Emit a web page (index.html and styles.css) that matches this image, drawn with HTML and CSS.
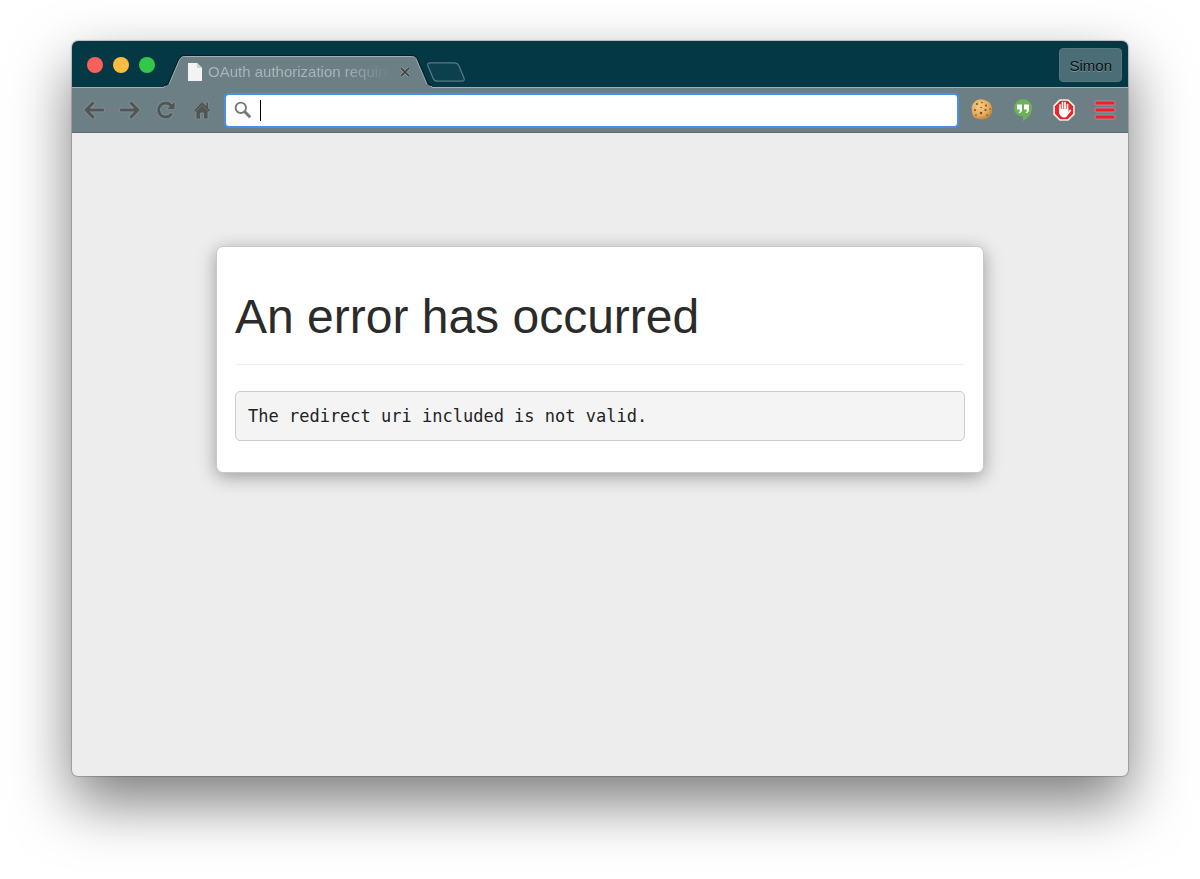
FILE: index.html
```html
<!DOCTYPE html>
<html lang="en">
<head>
<meta charset="utf-8">
<meta name="viewport" content="width=device-width, initial-scale=1">
<title>OAuth authorization required</title>
<link rel="stylesheet" href="styles.css">
</head>
<body>
<div class="window">
  <header class="titlebar">
    <div class="lights">
      <button class="light light-close" aria-label="Close window"></button>
      <button class="light light-min" aria-label="Minimize window"></button>
      <button class="light light-zoom" aria-label="Zoom window"></button>
    </div>
    <div class="tab">
      <svg class="tab-shape" viewBox="0 0 268 33" aria-hidden="true">
        <path d="M0 33V32C4 32 5 30 6 27L15 6C17 2 18 1 22 1H246C250 1 252 2 253 6L262 27C263 30 264 32 268 32V33Z" fill="#6b7f85"/>
        <path d="M0 30C3 30 4 29 5 26L14 5C16 1 18 0.5 22 0.5H246C251 0.5 253 2 254 5L263 26C264 29 265 30 268 30" fill="none" stroke="#021e29"/>
        <path d="M0 31.5C4 31.5 5 30 6 27L15 6C17 2 18 1.5 22 1.5H246C250 1.5 252 2 253 6L262 27C263 30 264 31.5 268 31.5" fill="none" stroke="#a3afb3"/>
      </svg>
      <svg class="page-icon" viewBox="0 0 14 18" aria-hidden="true">
        <path d="M0 0H9L14 5V18H0Z" fill="#f3f3f3"/>
        <path d="M9 0V5H14Z" fill="#cfd3d4"/>
      </svg>
      <span class="tab-title">OAuth authorization required</span>
      <button class="tab-close" aria-label="Close tab">
        <svg viewBox="0 0 10 10" width="10" height="10"><path d="M1 1L9 9M9 1L1 9" stroke="#a3afb3" stroke-width="3"/><path d="M1 1L9 9M9 1L1 9" stroke="#434747" stroke-width="1.8"/></svg>
      </button>
    </div>
    <button class="new-tab" aria-label="New tab">
      <svg viewBox="0 0 40 20" width="40" height="20"><path d="M4 .8H28Q32 .8 33 4L38 16Q39 19.2 36 19.2H12Q8 19.2 7 16L2 4Q1 .8 4 .8Z" fill="#0d404d" stroke="#597a82" stroke-width="1.2"/></svg>
    </button>
    <button class="profile">Simon</button>
  </header>
  <nav class="toolbar" aria-label="Browser">
    <div class="nav-buttons">
      <button class="tool" aria-label="Back">
        <svg viewBox="0 0 22 20" width="22" height="20"><path class="glow" d="M10 3L3 10L10 17M3 10H20"/><path class="ink" d="M10 3L3 10L10 17M3 10H20"/></svg>
      </button>
      <button class="tool" aria-label="Forward">
        <svg viewBox="0 0 22 20" width="22" height="20"><path class="glow" d="M12 3L19 10L12 17M19 10H2"/><path class="ink" d="M12 3L19 10L12 17M19 10H2"/></svg>
      </button>
      <button class="tool" aria-label="Reload">
        <svg viewBox="0 0 22 20" width="22" height="20"><path class="glow" d="M16 14.500A7 7 0 1 1 15.500 5L17 7"/><path d="M20 1V9.500H11.500Z" fill="#535553" stroke="#86979b" stroke-width=".7"/><path class="ink" d="M16 14.500A7 7 0 1 1 15.500 5L17 7"/></svg>
      </button>
      <button class="tool" aria-label="Home">
        <svg viewBox="0 0 22 20" width="22" height="20"><path d="M11 1.500L2.500 10.500L4 12H5V19H9.500V13H12.500V19H17V12H18L19.500 10.500L17.500 8V2H15V5.500Z" fill="#535553" stroke="#86979b" stroke-width=".7"/><path d="M4.500 11.800L11 5.200L17.500 11.800" fill="none" stroke="#7c8c8f" stroke-width=".5"/></svg>
      </button>
    </div>
    <label class="address">
      <svg viewBox="0 0 18 18" width="18" height="18" aria-hidden="true"><circle cx="6.800" cy="6.800" r="5.200" fill="none" stroke="#777" stroke-width="1.900"/><path d="M10.800 10.800L16.200 16.200" stroke="#777" stroke-width="3"/></svg>
      <span class="caret"></span>
      <input class="address-input" type="text" aria-label="Address and search bar">
    </label>
    <div class="extensions">
      <button class="tool" aria-label="Cookies">
        <svg viewBox="0 0 24 24" width="24" height="24">
          <defs><radialGradient id="cookie" cx=".4" cy=".35" r=".7"><stop offset="0" stop-color="#f6cd83"/><stop offset=".65" stop-color="#e2aa5d"/><stop offset="1" stop-color="#b97a34"/></radialGradient></defs>
          <path d="M7 2Q12 0 17 3Q22 5 22 11Q23 17 18 20Q13 23 8 21Q2 20 2 14Q0 6 7 2Z" fill="url(#cookie)"/>
          <g fill="#7b4a25"><circle cx="7" cy="6" r="1"/><circle cx="12" cy="4.500" r=".8"/><circle cx="16" cy="7.500" r="1"/><circle cx="11" cy="9.500" r=".8"/><circle cx="5" cy="12" r="1"/><circle cx="15.500" cy="12" r="1.100"/><circle cx="20" cy="11" r=".8"/><circle cx="11" cy="15" r="1.200"/><circle cx="6" cy="17" r=".8"/><circle cx="17" cy="17" r=".8"/></g>
        </svg>
      </button>
      <button class="tool" aria-label="Hangouts">
        <svg viewBox="0 0 24 24" width="24" height="24"><path d="M12 1A9 9 0 0 0 3 10C3 15 7 18.500 12 18.500V23C17 20.500 21 15.500 21 10A9 9 0 0 0 12 1Z" fill="#6fb158"/><path d="M6 6.500H11V12Q11 14 9 15H7.500Q9 13.500 9 11.500H6ZM13 6.500H18V12Q18 14 16 15H14.500Q16 13.500 16 11.500H13Z" fill="#fff"/></svg>
      </button>
      <button class="tool" aria-label="Ad blocker">
        <svg viewBox="0 0 24 24" width="24" height="24"><path d="M7.500 1H16.500L23 7.500V16.500L16.500 23H7.500L1 16.500V7.500Z" fill="#fff" stroke="#777" stroke-width=".7"/><path d="M8.200 2.800H15.800L21.200 8.200V15.800L15.800 21.200H8.200L2.800 15.800V8.200Z" fill="#e5292b"/><path d="M8 12.500V7M10.500 11V4.700M13 11V4.700M15.500 12V6.500M15.500 16L18.300 12.500" stroke="#fff" stroke-width="1.700" stroke-linecap="round"/><path d="M7.200 11H16.300V15Q15.500 19.500 12 19.500Q9 19.500 7.200 15.500Z" fill="#fff"/></svg>
      </button>
      <button class="tool" aria-label="Menu">
        <svg viewBox="0 0 24 24" width="24" height="24"><g fill="#ed2229" stroke="#9ba4a6" stroke-width=".8"><rect x="2" y="3" width="20" height="4" rx="1"/><rect x="2" y="10" width="20" height="4" rx="1"/><rect x="2" y="17" width="20" height="4" rx="1"/></g></svg>
      </button>
    </div>
  </nav>
  <main class="page">
    <section class="card">
      <h1 class="card-title">An error has occurred</h1>
      <pre class="message">The redirect uri included is not valid.</pre>
    </section>
  </main>
</div>
</body>
</html>
```
FILE: styles.css
```css
* { box-sizing: border-box; }
html { background: #fff; }
body {
  display: flex;
  flex-direction: column;
  min-height: 100vh;
  margin: 0;
  padding: 41px 72px 103px;
  font-family: "Liberation Sans", Arial, sans-serif;
}
button { padding: 0; border: 0; background: none; font: inherit; }
svg { display: block; }
.window {
  display: flex;
  flex: 1;
  flex-direction: column;
  border-radius: 6px;
  background: #ededed;
  box-shadow: 0 0 1px 1px rgba(0, 0, 0, .2), 0 26px 60px rgba(0, 0, 0, .52);
}
.titlebar {
  display: flex;
  align-items: flex-end;
  height: 47px;
  border-radius: 6px 6px 0 0;
  border-bottom: 1px solid #a3afb3;
  background: #043845;
}
.lights {
  display: flex;
  gap: 10px;
  align-self: center;
  padding: 2px 10px 0 15px;
}
.light { width: 16px; height: 16px; border-radius: 50%; }
.light-close { background: #fc605b; }
.light-min { background: #fdbc40; }
.light-zoom { background: #34c84a; }
.tab {
  position: relative;
  display: flex;
  align-items: center;
  width: 268px;
  height: 33px;
  margin: 0 0 -1px -1px;
  padding: 0 22px 0 24px;
}
.tab-shape { position: absolute; inset: 0; width: 100%; height: 100%; }
.page-icon { position: relative; width: 14px; height: 18px; }
.tab-title {
  position: relative;
  flex: 1;
  min-width: 0;
  margin: 0 10px 0 6px;
  overflow: hidden;
  white-space: nowrap;
  font-size: 15px;
  line-height: 18px;
  color: #a9b5b7;
  -webkit-mask-image: linear-gradient(to right, #000 75%, transparent);
  mask-image: linear-gradient(to right, #000 75%, transparent);
}
.tab-close { position: relative; }
.new-tab { margin: 0 0 5px -6px; }
.profile {
  align-self: center;
  height: 34px;
  margin: 2px 6px 0 auto;
  padding: 0 9px;
  border: 1px solid #58767d;
  border-radius: 4px;
  background: #4b6d75;
  color: #0a0f11;
  font-size: 15px;
  text-shadow: 0 1px 0 #7d959b;
}
.toolbar {
  display: flex;
  align-items: center;
  gap: 11px;
  height: 45px;
  padding: 0 11px;
  border-bottom: 1px solid #5d6d72;
  background: #6b7f85;
}
.nav-buttons { display: flex; gap: 14px; }
.glow, .ink { fill: none; stroke-linejoin: round; stroke-linecap: round; }
.glow { stroke: #86979b; stroke-width: 4.4; }
.ink { stroke: #535553; stroke-width: 3; }
.address {
  display: flex;
  flex: 1;
  align-items: center;
  gap: 8px;
  height: 35px;
  padding: 0 8px;
  border: 2px solid #4a90e2;
  border-radius: 5px;
  background: #fff;
}
.caret { width: 1px; height: 21px; background: #000; }
.address-input {
  flex: 1;
  min-width: 0;
  border: 0;
  outline: 0;
  background: transparent;
  font: inherit;
}
.extensions { display: flex; gap: 17px; }
.page { flex: 1; padding: 113px 24px; }
.card {
  max-width: 768px;
  margin: 0 auto;
  padding: 41px 18px 31px;
  border: 1px solid #c8c8c8;
  border-radius: 7px;
  background: #fff;
  box-shadow: 0 4px 18px rgba(0, 0, 0, .35);
}
.card-title {
  margin: 0 0 26px;
  padding-bottom: 18px;
  border-bottom: 1px solid #eee;
  font-size: 48px;
  font-weight: 500;
  line-height: 58px;
  color: #2b2b2b;
}
.message {
  margin: 0;
  padding: 12px;
  border: 1px solid #ccc;
  border-radius: 5px;
  background: #f4f4f4;
  color: #222;
  font-family: "DejaVu Sans Mono", monospace;
  font-size: 17px;
  line-height: 24px;
  white-space: pre-wrap;
}
```
